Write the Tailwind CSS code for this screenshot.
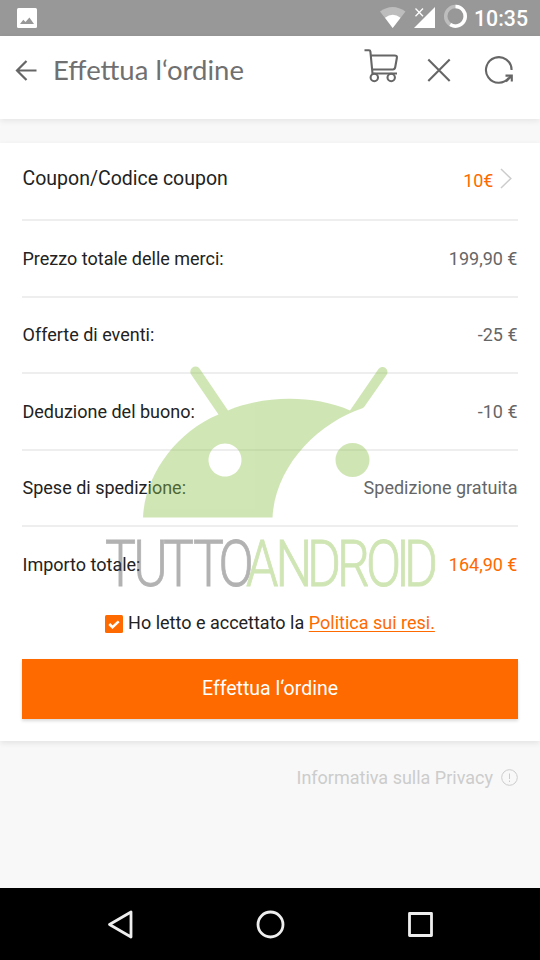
<!DOCTYPE html>
<html lang="it">
<head>
<meta charset="utf-8">
<title>Effettua l‘ordine</title>
<script src="https://cdn.jsdelivr.net/npm/@tailwindcss/browser@4"></script>
</head>
<body class="w-[540px] h-[960px] overflow-hidden bg-[#f8f8f8] font-[Roboto,sans-serif] text-[18px] text-[#222] flex flex-col relative">
  <!-- Status bar -->
  <div class="h-9 shrink-0 bg-[#989898] flex items-center text-white">
    <svg class="ml-[17px]" width="20" height="20" viewBox="0 0 20 20"><rect width="20" height="20" rx="1.5" fill="#fff"/><path d="M3 16l3.300-4.300 2.200 2.400 3.900-4.500L17 16z" fill="#989898"/></svg>
    <svg class="ml-auto" width="88" height="36" viewBox="0 0 88 36">
      <path d="M0 11.500Q12.500 2.500 25.500 11.500L12.700 28z" fill="#bdbdbd"/>
      <path d="M5 17.800Q12.700 11.800 20.500 17.800L12.700 28z" fill="#fff"/>
      <path d="M55 7V28H34z" fill="#fff"/>
      <path d="M35.500 8.500l7.500 7.800M43 8.500l-7.500 7.800" stroke="#fff" stroke-width="1.300"/>
      <circle cx="75.500" cy="16.300" r="9.800" fill="none" stroke="#bdbdbd" stroke-width="3.500"/>
      <path d="M75.500 6.500A9.800 9.800 0 1 1 70.200 24.600" fill="none" stroke="#fff" stroke-width="3.500"/>
    </svg>
    <span class="ml-[6px] mr-[12px] mt-[2px] w-[54px] text-[21.300px] font-medium whitespace-nowrap">10:35</span>
  </div>
  <!-- Page header -->
  <header class="h-[83px] shrink-0 bg-white shadow-[0_2px_6px_rgba(0,0,0,0.08)] flex items-start text-[#707070] relative">
    <svg class="ml-[15px] mt-[23px]" width="23" height="22" viewBox="0 0 23 22" fill="none" stroke="#666" stroke-width="2.200"><path d="M21.500 11.500H2.500M11.500 2L2 11.500l9.500 9.500"/></svg>
    <h1 class="ml-[15px] mt-[16px] font-[Lato,sans-serif] text-[27.500px] leading-9 whitespace-nowrap">Effettua l‘ordine</h1>
    <svg class="absolute left-[364px] top-[12px]" width="152" height="38" viewBox="0 0 152 38" fill="none" stroke="#666" stroke-width="2.100">
      <path d="M.5 2.300h4.500q1.300 0 1.400 1.300L8.500 25.500H33M7 7.500h23.500q2.800 0 2.400 2.200L31.200 19.300q-.4 2.200-2.400 2.200H8.300"/>
      <circle cx="10.300" cy="29.500" r="3.700"/><circle cx="27.200" cy="29.500" r="3.700"/>
      <path d="M64.300 11.500l21.400 21.400M85.700 11.500L64.300 32.900"/>
      <path d="M147.600 22A12.800 12.800 0 1 0 145 29.700"/><path d="M141.500 27.600h6.300v5.800M147.500 28l-5.500 5.500"/>
    </svg>
  </header>
  <!-- Order summary -->
  <main class="mt-6 h-[598px] shrink-0 bg-white shadow-[0_2px_6px_rgba(0,0,0,0.09)] px-[22px] flex flex-col">
    <div class="h-[78px] shrink-0 border-b-2 border-[#eee] flex justify-between pl-[.5px]">
      <span class="text-[19.500px] leading-[72px]">Coupon/Codice coupon</span>
      <span class="flex text-[#ff6a00] leading-[76px] pr-[6.500px]">10€<svg class="ml-[6px] mt-[25px]" width="12" height="21" viewBox="0 0 12 21" fill="none" stroke="#ccc" stroke-width="1.500"><path d="M1 1l9.800 9.500L1 20"/></svg></span>
    </div>
    <div class="h-[76.500px] shrink-0 border-b-2 border-[#eee] flex items-center justify-between px-[.5px]"><span>Prezzo totale delle merci:</span><span class="text-[#666]">199,90 €</span></div>
    <div class="h-[76.500px] shrink-0 border-b-2 border-[#eee] flex items-center justify-between px-[.5px]"><span>Offerte di eventi:</span><span class="text-[#666]">-25 €</span></div>
    <div class="h-[76.500px] shrink-0 border-b-2 border-[#eee] flex items-center justify-between px-[.5px]"><span>Deduzione del buono:</span><span class="text-[#666]">-10 €</span></div>
    <div class="h-[76.500px] shrink-0 border-b-2 border-[#eee] flex items-center justify-between px-[.5px]"><span>Spese di spedizione:</span><span class="text-[#666]">Spedizione gratuita</span></div>
    <div class="h-[75px] shrink-0 flex items-center justify-between px-[.5px]"><span>Importo totale:</span><span class="text-[#ff6a00]">164,90 €</span></div>
    <div class="h-[40px] shrink-0 flex items-center justify-center whitespace-nowrap">
      <svg class="mr-[5px] mt-[4px]" width="18" height="18" viewBox="0 0 18 18"><rect width="18" height="18" rx="1.500" fill="#ff6a00"/><path d="M4.300 9l3.200 3.200L13.700 6.300" fill="none" stroke="#fff" stroke-width="2.500"/></svg>
      <span>Ho letto e accettato la <a class="text-[#ff6a00] underline underline-offset-2">Politica sui resi.</a></span>
    </div>
    <button class="mt-[17px] h-[60px] shrink-0 bg-[#ff6a00] text-white text-[19.500px] shadow-[0_2px_3px_rgba(0,0,0,0.15)]">Effettua l‘ordine</button>
  </main>
  <div class="mt-[24px] h-6 flex items-center justify-end text-[#ccc] pr-[22px]">
    <span>Informativa sulla Privacy</span>
    <svg class="ml-[8px] mt-px" width="17" height="17" viewBox="0 0 17 17" fill="none" stroke="#ccc"><circle cx="8.500" cy="8.500" r="7.800"/><path d="M8.500 4.500v5.500M8.500 11.500v1.500"/></svg>
  </div>
  <!-- Navigation bar -->
  <nav class="mt-auto h-[72px] shrink-0 bg-black flex items-center justify-center gap-[122px]">
    <svg width="28" height="30" viewBox="0 0 28 30" fill="none" stroke="#eee" stroke-width="2.800" stroke-linejoin="round"><path d="M26 3V28L4.500 15.500z"/></svg>
    <svg width="30" height="30" viewBox="0 0 30 30" fill="none" stroke="#eee" stroke-width="2.800"><circle cx="15.500" cy="15.500" r="12.500"/></svg>
    <svg width="28" height="30" viewBox="0 0 28 30" fill="none" stroke="#eee" stroke-width="2.800" stroke-linejoin="round"><rect x="2.500" y="4.500" width="22" height="22"/></svg>
  </nav>
  <!-- Watermark over the summary -->
  <svg class="absolute left-0 top-0 pointer-events-none" width="540" height="888" viewBox="0 0 540 888">
    <g opacity=".42" fill="#8fc34f">
      <path fill-rule="evenodd" d="M143 517.500C145 475 176 432 218.500 414.500L191.500 375A5 5 0 0 1 199.500 368.500L228 410.500C262 396 312 394 350 410.500L378.500 369A5 5 0 0 1 386.500 375L364.500 406.500L363 408C318 423 275 466 272.500 517.500zM225 443.500a16.500 16.500 0 1 0 .01 0z"/>
      <circle cx="352.500" cy="460" r="17"/>
      <g transform="scale(.81 1)" font-family="Roboto" font-weight="300" font-size="64" stroke-width=".9">
        <text x="129.600 164.800 201.200 238.300 269.800" y="586.300" fill="#4a4a4a" stroke="#4a4a4a">TUTTO</text>
        <text x="303.700 340.100 379 416 451.900 488.900 498.800" y="586.300" stroke="#8fc34f">ANDROID</text>
      </g>
    </g>
  </svg>
</body>
</html>
